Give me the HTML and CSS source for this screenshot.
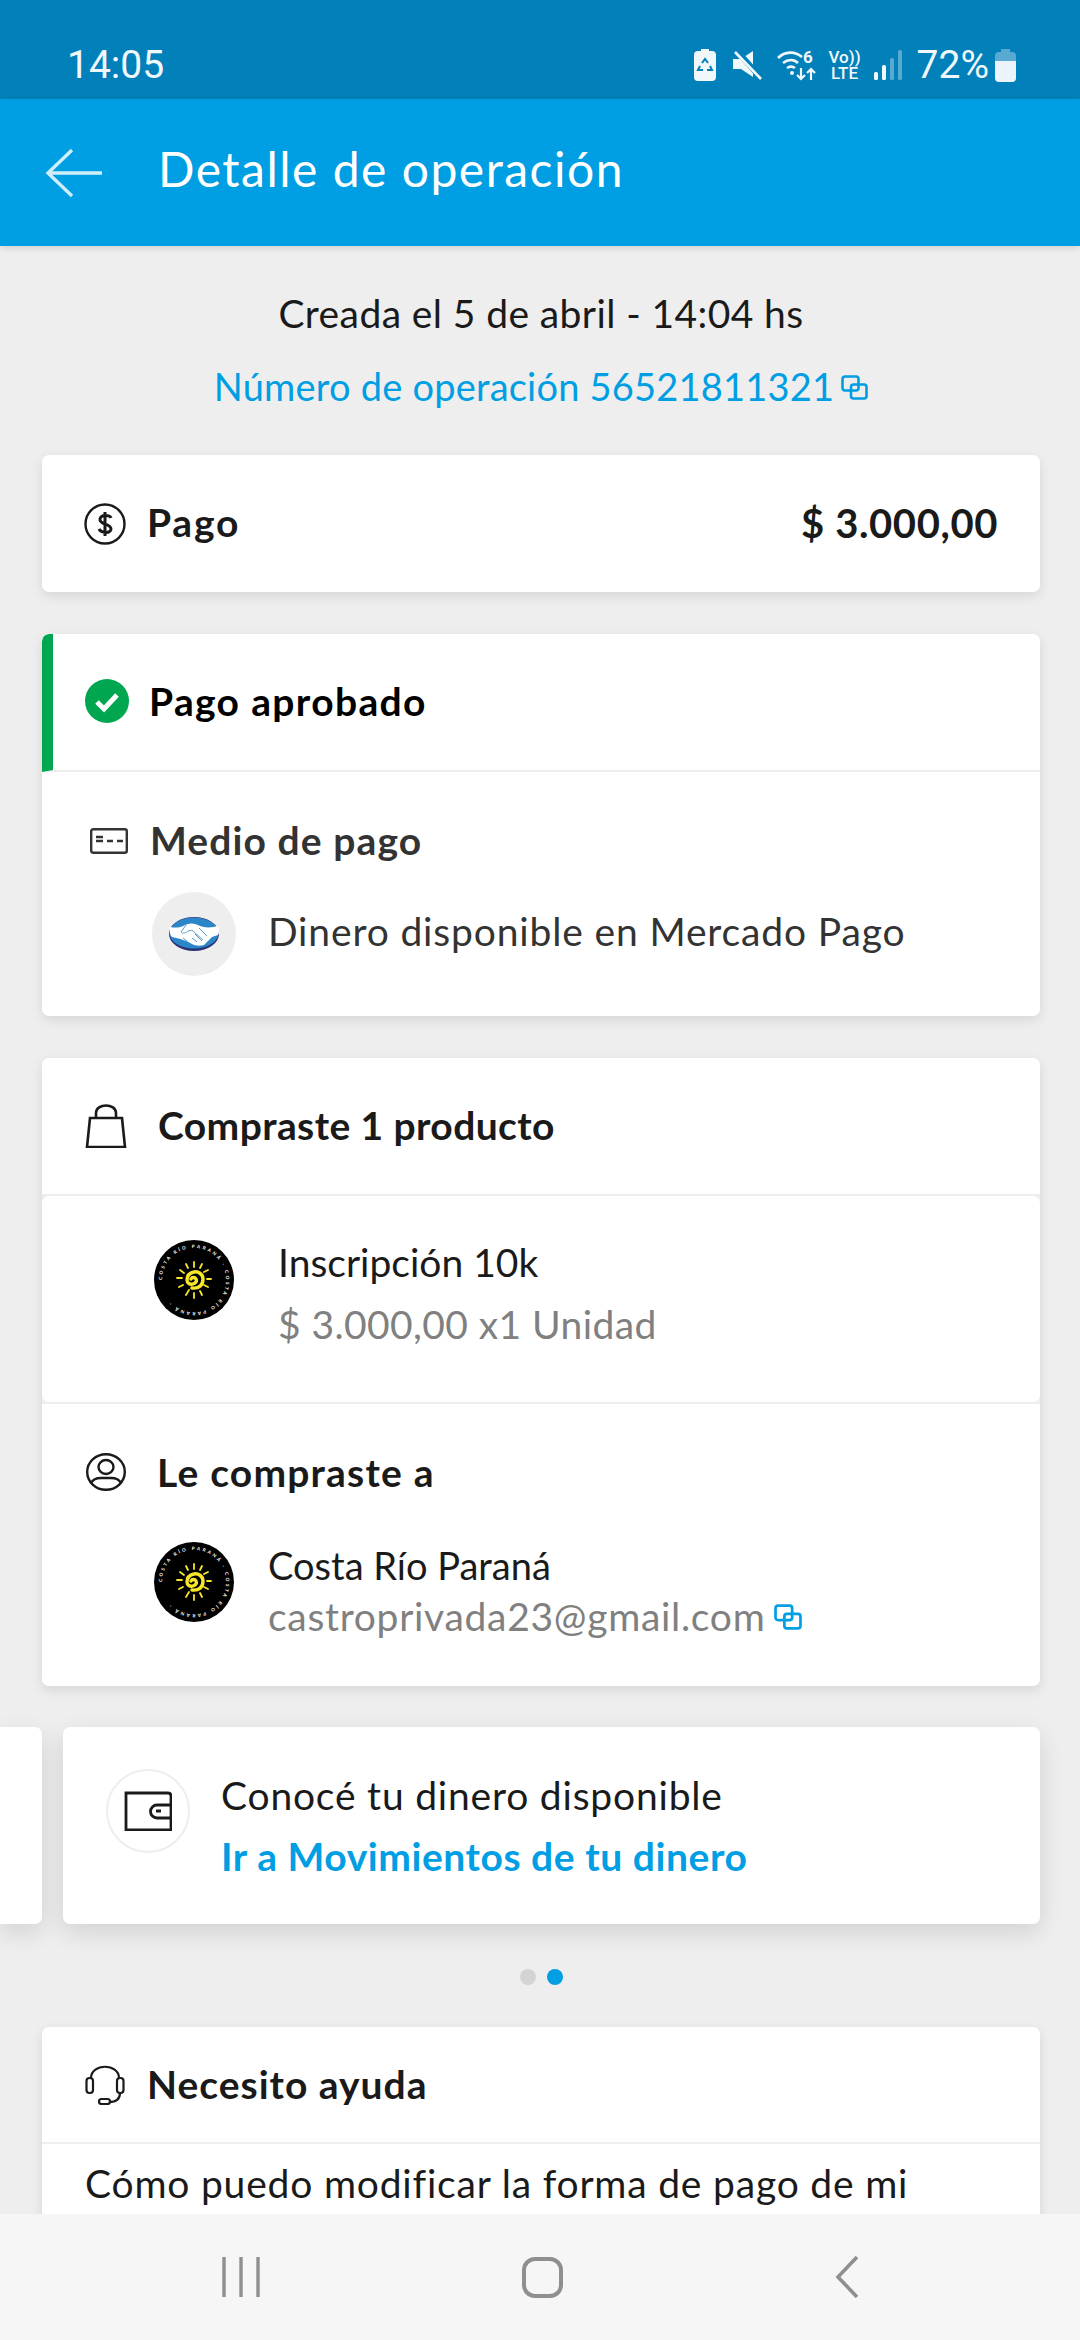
FILE: index.html
```html
<!DOCTYPE html>
<html lang="es-AR">
<head>
    <meta charset="UTF-8">
    <title>Detalle de operación</title>
    <link rel="stylesheet" href="styles.css">
</head>
<body>
    <div class="screen">
        <div class="status-bar">
            <span class="clock">14:05</span>
            <div class="status-icons">
                <svg width="22" height="32" viewBox="0 0 22 32"><path fill="#f1f8fc" d="M7 0h8v2h3a4 4 0 0 1 4 4v22a4 4 0 0 1-4 4H4a4 4 0 0 1-4-4V6a4 4 0 0 1 4-4h3z"/><path fill="none" stroke="#0180b9" stroke-width="2" d="M8 14l3-4 3 4M16 17l2 4h-5M6 17l-2 4h5"/></svg>
                <svg class="ml-17" width="29" height="29" viewBox="0 0 29 29"><path fill="#f1f8fc" d="M0 8h8L20 0v26L8 18H0z"/><path stroke="#0180b9" stroke-width="6" d="M3 -1l27 30"/><path stroke="#f1f8fc" stroke-width="2.6" d="M2 1l26 27"/></svg>
                <svg class="ml-15" width="42" height="32" viewBox="0 0 42 32">
                    <g fill="none" stroke="#f1f8fc" stroke-width="2.6"><path d="M1 9c7-7 17-7 24-1"/><path d="M6 14c5-4 11-4 15 0"/><path d="M10 19c3-2 5-2 8 0"/></g>
                    <circle cx="15" cy="24" r="2" fill="#f1f8fc"/>
                    <text class="wifi-six" x="26" y="14">6</text>
                    <path stroke="#f1f8fc" stroke-width="2.2" fill="none" d="M24 19v11M20 26l4 4 4-4M34 31V20M30 24l4-4 4 4"/>
                </svg>
                <div class="volte ml-9"><span>Vo))</span><span>LTE</span></div>
                <svg class="ml-13" width="28" height="30" viewBox="0 0 28 30"><rect y="22" width="4" height="8" rx="1.5" fill="#f1f8fc"/><rect x="8" y="15" width="4" height="15" rx="1.5" fill="#f1f8fc"/><rect x="16" y="8" width="4" height="22" rx="1.5" fill="#5aa9d1"/><rect x="24" width="4" height="30" rx="1.5" fill="#5aa9d1"/></svg>
                <span class="battery-pct">72%</span>
                <svg class="ml-6" width="21" height="33" viewBox="0 0 21 33"><path fill="#59aad3" d="M6 0h9v3h2a4 4 0 0 1 4 4v5H0V7a4 4 0 0 1 4-4h2z"/><path fill="#eaf4fa" d="M0 12h21v17a4 4 0 0 1-4 4H4a4 4 0 0 1-4-4z"/></svg>
            </div>
        </div>

        <header class="app-bar">
            <svg class="back-arrow" width="58" height="50" viewBox="0 0 58 50" fill="none" stroke="#cfeefb" stroke-width="3.4"><path d="M27 2L3 25l24 23M3 25h54"/></svg>
            <h1>Detalle de operación</h1>
        </header>

        <main class="content">
            <div class="meta">
                <p class="created">Creada el 5 de abril - 14:04 hs</p>
                <p class="op-number">Número de operación 56521811321<svg class="copy-icon" width="27" height="25" viewBox="0 0 27 25" fill="none" stroke="#009ee3" stroke-width="2.6"><rect x="1.5" y="1.5" width="16" height="14" rx="2.5"/><rect x="10" y="9.5" width="15.5" height="14" rx="2.5"/></svg></p>
            </div>

            <section class="card card-total">
                <svg class="icon" width="42" height="42" viewBox="0 0 42 42" fill="none" stroke="#1a1a1a" stroke-width="2.4"><circle cx="21" cy="21" r="19.5"/><path stroke-width="3" d="M27 15c-1-3-10-4-11 1-1 6 11 4 11 10 0 5-10 4-12 0M21 9v24"/></svg>
                <span class="title title-total">Pago</span>
                <span class="amount">$ 3.000,00</span>
            </section>

            <section class="card card-payment">
                <div class="row-approved">
                    <svg class="icon" width="44" height="44" viewBox="0 0 44 44"><circle cx="22" cy="22" r="22" fill="#00a650"/><path d="M12 23l7 7 13-14" fill="none" stroke="#fff" stroke-width="5"/></svg>
                    <span class="title title-approved">Pago aprobado</span>
                </div>
                <div class="row-method">
                    <div class="method-head">
                        <svg class="icon icon-card" width="38" height="26" viewBox="0 0 38 26" fill="none" stroke="#333" stroke-width="2.4"><rect x="1.2" y="1.2" width="35.6" height="23.6" rx="2"/><path d="M6 9h7M6 13h7M17 13h6M27 13h6"/></svg>
                        <span class="title title-method">Medio de pago</span>
                    </div>
                    <div class="method-body">
                        <div class="logo-circle">
                            <svg width="50" height="34" viewBox="0 0 50 34">
                                <ellipse cx="25" cy="17" rx="25" ry="17" fill="#2d3277"/>
                                <ellipse cx="25" cy="16" rx="24.5" ry="15.5" fill="#2b86c8"/>
                                <path fill="#fff" d="M1 10c5 1 10 1 15-2 5-2 9-2 13 0 5 3 13 3 20 1 2 3 1 7 0 9l-6 2-8 8c-3 1-9 1-12-1-4-3-11-5-20-7-2-2-3-6-2-10z"/>
                                <path fill="none" stroke="#5a9fcf" stroke-width="1" d="M17 8l-5 7c2 2 5 1 7-1 3-1 5-1 6 1l9 8M30 11l8 8M26 17l7 7M23 21l5 4M14 21l4 3"/>
                            </svg>
                        </div>
                        <span class="method-name">Dinero disponible en Mercado Pago</span>
                    </div>
                </div>
            </section>

            <section class="card card-purchase">
                <div class="row row-head">
                    <svg class="icon" width="42" height="44" viewBox="0 0 42 44" fill="none" stroke="#1a1a1a" stroke-width="2.6"><path d="M5 14h32l3 29H2zM11 14V9c0-10 20-10 20 0v5"/></svg>
                    <span class="title title-purchase">Compraste 1 producto</span>
                </div>
                <div class="row row-product">
                    <svg class="brand-logo" width="80" height="80" viewBox="0 0 80 80">
                        <circle cx="40" cy="40" r="40" fill="#000"/>
                        <path id="ring-a" fill="none" d="M8 40a32 32 0 1 1 64 0a32 32 0 1 1 -64 0"/>
                        <text class="ring-text"><textPath href="#ring-a">COSTA RÍO PARANÁ · COSTA RÍO PARANÁ ·</textPath></text>
                        <g stroke="#f7e62a" fill="none" stroke-linecap="round">
                            <path stroke-width="3.4" d="M38 48c7 1 11-3 11-9 0-5-5-8-9-7-5 1-7 4-7 8 0 3 3 5 6 4 3-1 4-3 3-5s-4-2-5 0"/>
                            <path stroke-width="1.8" d="M40 22v5M48 24l-2 4M54 30l-4 2M57 39h-4M54 47l-4-2M32 24l2 4M26 30l4 3M23 38h5M25 47l4-2M32 55l3-5M40 58v-5M48 55l-2-4"/>
                        </g>
                    </svg>
                    <div class="product-text">
                        <p class="product-name">Inscripción 10k</p>
                        <p class="product-price">$ 3.000,00 x1 Unidad</p>
                    </div>
                </div>
                <div class="row row-seller">
                    <div class="seller-head">
                        <svg class="icon" width="40" height="38" viewBox="0 0 40 38" fill="none" stroke="#1a1a1a" stroke-width="2.4"><ellipse cx="20" cy="19" rx="18.8" ry="17.8"/><ellipse cx="20" cy="14" rx="7.5" ry="7"/><path d="M5 30c2-4 7-5 10-5h10c3 0 8 1 10 5"/></svg>
                        <span class="title title-seller">Le compraste a</span>
                    </div>
                    <div class="seller-body">
                        <svg class="brand-logo" width="80" height="80" viewBox="0 0 80 80">
                            <circle cx="40" cy="40" r="40" fill="#000"/>
                            <path id="ring-b" fill="none" d="M8 40a32 32 0 1 1 64 0a32 32 0 1 1 -64 0"/>
                            <text class="ring-text"><textPath href="#ring-b">COSTA RÍO PARANÁ · COSTA RÍO PARANÁ ·</textPath></text>
                            <g stroke="#f7e62a" fill="none" stroke-linecap="round">
                                <path stroke-width="3.4" d="M38 48c7 1 11-3 11-9 0-5-5-8-9-7-5 1-7 4-7 8 0 3 3 5 6 4 3-1 4-3 3-5s-4-2-5 0"/>
                                <path stroke-width="1.8" d="M40 22v5M48 24l-2 4M54 30l-4 2M57 39h-4M54 47l-4-2M32 24l2 4M26 30l4 3M23 38h5M25 47l4-2M32 55l3-5M40 58v-5M48 55l-2-4"/>
                            </g>
                        </svg>
                        <div class="seller-text">
                            <p class="seller-name">Costa Río Paraná</p>
                            <p class="seller-mail">castroprivada23@gmail.com<svg class="copy-icon copy-mail" width="30" height="26" viewBox="0 0 27 25" fill="none" stroke="#009ee3" stroke-width="2.6"><rect x="1.5" y="1.5" width="16" height="14" rx="2.5"/><rect x="10" y="9.5" width="15.5" height="14" rx="2.5"/></svg></p>
                        </div>
                    </div>
                </div>
            </section>

            <div class="carousel">
                <div class="card slide-prev"></div>
                <section class="card slide">
                    <div class="wallet-circle">
                        <svg width="48" height="40" viewBox="0 0 48 40" fill="none" stroke="#1a1a1a" stroke-width="2.8"><path d="M47 39H2V2h42c2 0 3 1 3 3v34z"/><path d="M47 14H33a6 6 0 0 0 0 13h14"/><path stroke-width="3" d="M32 20h5"/></svg>
                    </div>
                    <div class="slide-text">
                        <p class="slide-title">Conocé tu dinero disponible</p>
                        <p class="slide-link">Ir a Movimientos de tu dinero</p>
                    </div>
                </section>
            </div>

            <div class="dots">
                <span class="dot"></span>
                <span class="dot dot-active"></span>
            </div>

            <section class="card card-help">
                <div class="row-help">
                    <svg class="icon" width="40" height="40" viewBox="0 0 40 40" fill="none" stroke="#1a1a1a" stroke-width="2.2"><path d="M6 13C6-2 34-2 34 13"/><rect x="1.5" y="13" width="6.5" height="15" rx="3"/><rect x="32" y="13" width="6.5" height="15" rx="3"/><path d="M35 28c0 6-4 9-11 9"/><rect x="14" y="34" width="11" height="5" rx="2.5"/></svg>
                    <span class="title title-help">Necesito ayuda</span>
                </div>
                <p class="help-item">Cómo puedo modificar la forma de pago de mi</p>
            </section>
        </main>

        <nav class="nav-bar">
            <svg width="38" height="40" viewBox="0 0 38 40" stroke="#8f8f8f" stroke-width="3.4"><path d="M2 0v40M19 0v40M36 0v40"/></svg>
            <svg class="nav-home" width="41" height="41" viewBox="0 0 41 41" fill="none" stroke="#8f8f8f" stroke-width="4"><rect x="2" y="2" width="37" height="37" rx="11"/></svg>
            <svg class="nav-back" width="24" height="42" viewBox="0 0 24 42" fill="none" stroke="#8f8f8f" stroke-width="3.6"><path d="M22 1L3 21l19 20"/></svg>
        </nav>
    </div>
</body>
</html>
```

FILE: styles.css
```css
* {
    box-sizing: border-box;
}
body {
    margin: 0;
    font-family: Lato, "Noto Sans", sans-serif;
    color: #1a1a1a;
    background-color: #eeeeee;
}
p, h1 {
    margin: 0;
}
.ring-text {
    font-family: Lato, sans-serif;
    font-size: 4.6px;
    font-weight: 700;
    letter-spacing: 2.3px;
    fill: #fff;
}
.screen {
    position: relative;
    width: 1080px;
    height: 2340px;
    overflow: hidden;
    background-color: #eeeeee;
}

/* status bar */
.status-bar {
    height: 99px;
    padding: 46px 64px 0 67px;
    display: flex;
    justify-content: space-between;
    align-items: flex-start;
    background-color: #0180b9;
    color: #f1f8fc;
    font-family: Roboto, sans-serif;
}
.clock {
    font-size: 39px;
    line-height: 38px;
}
.status-icons {
    display: flex;
    align-items: center;
    height: 36px;
    margin-top: 1px;
}
.wifi-six {
    font-family: Roboto, sans-serif;
    font-size: 17px;
    font-weight: 700;
    fill: #f1f8fc;
}
.volte {
    display: flex;
    flex-direction: column;
    font-size: 17px;
    font-weight: 500;
    line-height: 16px;
    align-items: center;
}
.battery-pct {
    margin-left: 15px;
    font-size: 39px;
    line-height: 36px;
}
.ml-6 { margin-left: 6px; }
.ml-9 { margin-left: 9px; }
.ml-13 { margin-left: 13px; }
.ml-15 { margin-left: 15px; }
.ml-17 { margin-left: 17px; }

/* app bar */
.app-bar {
    position: relative;
    height: 147px;
    padding-left: 45px;
    display: flex;
    align-items: center;
    background-color: #009ee3;
    box-shadow: 0 2px 6px rgba(0,0,0,0.12);
}
.app-bar h1 {
    margin-left: 55px;
    padding-bottom: 8px;
    font-size: 48px;
    font-weight: 400;
    letter-spacing: 1.5px;
    color: #fff;
}

/* content */
.content {
    padding: 0 40px 0 42px;
}
.meta {
    padding-top: 45px;
    text-align: center;
    font-size: 39px;
    line-height: 44px;
}
.created {
    letter-spacing: 0.4px;
}
.op-number {
    margin-top: 29px;
    font-size: 38px;
    letter-spacing: 0.2px;
    color: #009ee3;
}
.copy-icon {
    margin-left: 7px;
    vertical-align: 1px;
}
.card {
    background-color: #fff;
    border-radius: 7px;
    box-shadow: 0 4px 12px rgba(0,0,0,0.1);
}
.title {
    font-size: 39px;
    font-weight: 700;
    letter-spacing: 1px;
    color: #1a1a1a;
}
.card-total {
    margin-top: 47px;
    height: 137px;
    padding: 0 42px;
    display: flex;
    align-items: center;
}
.title-total {
    margin-left: 21px;
    padding-bottom: 4px;
    letter-spacing: 1.8px;
}
.amount {
    margin-left: auto;
    padding-bottom: 2px;
    font-size: 40px;
    font-weight: 700;
    letter-spacing: 0.6px;
}

.card-payment {
    margin-top: 42px;
    height: 382px;
    overflow: hidden;
}
.row-approved {
    height: 138px;
    padding: 0 0 2px 32px;
    display: flex;
    align-items: center;
    border-left: 11px solid #00a650;
    border-bottom: 2px solid #eeeeee;
    border-top-left-radius: 7px;
}
.title-approved {
    margin-left: 20px;
    letter-spacing: 1.35px;
    color: #000;
}
.row-method {
    padding: 0 0 0 48px;
}
.method-head {
    height: 46px;
    margin-top: 46px;
    display: flex;
    align-items: center;
}
.title-method {
    margin-left: 22px;
    padding-bottom: 3px;
    letter-spacing: 1.1px;
    color: #333;
}
.method-body {
    margin-top: 28px;
    margin-left: 62px;
    display: flex;
    align-items: center;
}
.logo-circle {
    width: 84px;
    height: 84px;
    border-radius: 50%;
    background-color: #eeeeee;
    display: flex;
    align-items: center;
    justify-content: center;
}
.method-name {
    margin-left: 32px;
    padding-bottom: 7px;
    font-size: 39px;
    letter-spacing: 0.85px;
    color: #333;
}

.card-purchase {
    margin-top: 42px;
    height: 628px;
    display: flex;
    flex-direction: column;
    gap: 2px;
    background-color: #eeeeee;
}
.row {
    background-color: #fff;
    border-radius: 7px;
}
.row-head {
    height: 136px;
    padding-left: 43px;
    display: flex;
    align-items: center;
    border-radius: 7px 7px 0 0;
}
.title-purchase {
    margin-left: 31px;
    padding-bottom: 2px;
    letter-spacing: 0.4px;
}
.row-product {
    height: 206px;
    padding: 44px 0 0 112px;
    display: flex;
    align-items: flex-start;
}
.product-text {
    margin-left: 44px;
    font-size: 39px;
}
.product-name {
    line-height: 44px;
}
.product-price {
    margin-top: 18px;
    line-height: 44px;
    letter-spacing: 0.4px;
    color: #808080;
}
.row-seller {
    flex: 1;
    padding: 46px 0 0 44px;
    border-radius: 0 0 7px 7px;
}
.seller-head {
    display: flex;
    align-items: center;
    height: 44px;
}
.title-seller {
    margin-left: 31px;
    letter-spacing: 1.2px;
}
.seller-body {
    margin-top: 48px;
    margin-left: 68px;
    display: flex;
    align-items: flex-start;
}
.seller-text {
    margin-left: 34px;
    margin-top: 1px;
}
.seller-name {
    font-size: 38px;
    line-height: 44px;
}
.seller-mail {
    margin-top: 7px;
    font-size: 39px;
    line-height: 44px;
    letter-spacing: 0.7px;
    color: #808080;
}
.copy-mail {
    margin-left: 8px;
    vertical-align: 1px;
}

.carousel {
    margin: 41px 0 0 -42px;
    display: flex;
    gap: 21px;
}
.slide-prev {
    width: 42px;
    height: 197px;
    border-radius: 0 7px 7px 0;
    box-shadow: 0 8px 24px rgba(0,0,0,0.12);
}
.slide {
    width: 977px;
    height: 197px;
    padding: 42px 0 0 43px;
    display: flex;
    align-items: flex-start;
    box-shadow: 0 8px 24px rgba(0,0,0,0.12);
}
.wallet-circle {
    width: 84px;
    height: 84px;
    border: 2px solid #eeeeee;
    border-radius: 50%;
    display: flex;
    align-items: center;
    justify-content: center;
}
.slide-text {
    margin-left: 31px;
    margin-top: 4px;
    font-size: 39px;
}
.slide-title {
    line-height: 44px;
    letter-spacing: 0.8px;
}
.slide-link {
    margin-top: 17px;
    line-height: 44px;
    font-weight: 700;
    letter-spacing: 0.55px;
    color: #009ee3;
}

.dots {
    margin-top: 45px;
    height: 16px;
    display: flex;
    justify-content: center;
    gap: 11px;
}
.dot {
    width: 16px;
    height: 16px;
    border-radius: 50%;
    background-color: #d4d4d4;
}
.dot-active {
    background-color: #009ee3;
}

.card-help {
    margin-top: 42px;
    height: 340px;
}
.row-help {
    height: 117px;
    padding-left: 43px;
    display: flex;
    align-items: center;
    border-bottom: 2px solid #eeeeee;
}
.title-help {
    margin-left: 22px;
    padding-bottom: 2px;
}
.help-item {
    margin-top: 17px;
    padding: 0 43px;
    font-size: 39px;
    line-height: 44px;
    letter-spacing: 0.8px;
}

/* system nav */
.nav-bar {
    position: absolute;
    left: 0;
    right: 0;
    bottom: 0;
    height: 126px;
    padding-left: 222px;
    display: flex;
    align-items: center;
    background-color: #f6f6f6;
}
.nav-home {
    margin-left: 262px;
}
.nav-back {
    margin-left: 272px;
}
```
